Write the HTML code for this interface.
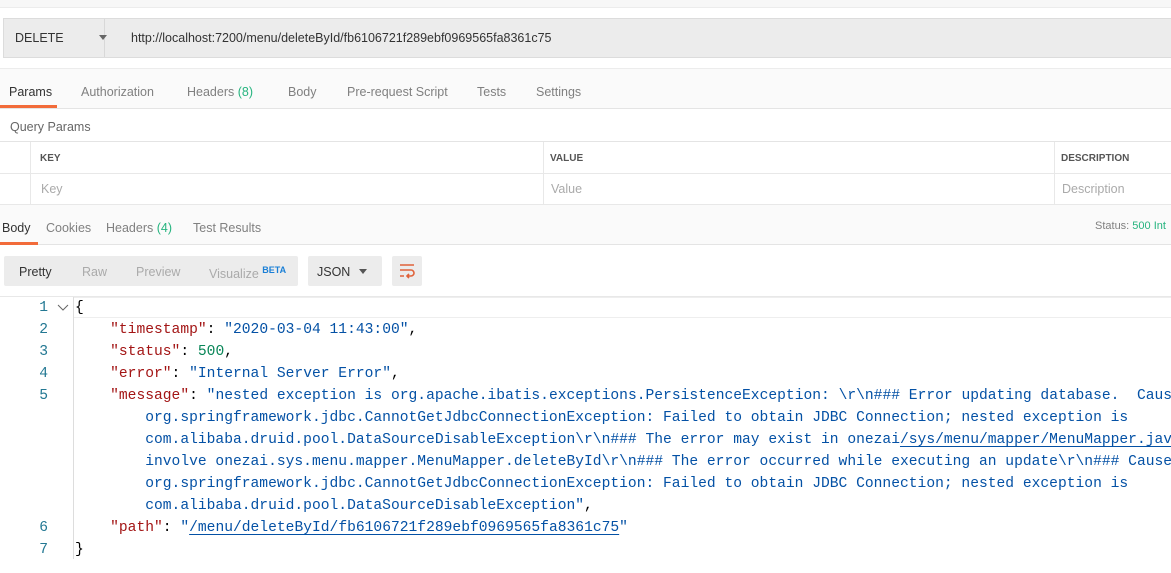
<!DOCTYPE html>
<html><head><meta charset="utf-8"><style>
*{margin:0;padding:0;box-sizing:border-box}
body{width:1171px;height:573px;overflow:hidden;background:#fff;font-family:"Liberation Sans",sans-serif;font-size:12.5px;color:#808080;position:relative}
.abs{position:absolute}
.code{font-family:"Liberation Mono",monospace;font-size:14.63px;line-height:22px;white-space:pre;color:#000}
.k{color:#a31515}.s{color:#0451a5}.n{color:#098658}
.u{text-decoration:underline;text-underline-offset:3px}
.ln{position:absolute;left:0;width:48px;text-align:right;color:#237893;font-family:"Liberation Mono",monospace;font-size:14.63px;line-height:22px}
</style></head><body>
<div class="abs" style="left:0;top:0;width:1171px;height:8px;background:#f7f7f7;border-bottom:1px solid #ececec"></div>
<div class="abs" style="left:3px;top:18px;width:1168px;height:40px;background:#ececec;border:1px solid #dcdcdc;border-right:none"></div>
<div class="abs" style="left:104px;top:19px;width:1px;height:38px;background:#d8d8d8"></div>
<div class="abs" style="left:15px;top:31px;color:#333;font-size:12.5px">DELETE</div>
<div class="abs" style="left:99px;top:35px;width:0;height:0;border-left:4px solid transparent;border-right:4px solid transparent;border-top:5px solid #666"></div>
<div class="abs" style="left:131px;top:31px;color:#333;font-size:12.5px">http://localhost:7200/menu/deleteById/fb6106721f289ebf0969565fa8361c75</div>
<div class="abs" style="left:0;top:68px;width:1171px;height:41px;background:#fafafa;border-top:1px solid #ececec;border-bottom:1px solid #e4e4e4"></div>
<div class="abs" style="left:9px;top:85px;color:#333">Params</div>
<div class="abs" style="left:0;top:105px;width:57px;height:3px;background:#f26b3a"></div>
<div class="abs" style="left:81px;top:85px">Authorization</div>
<div class="abs" style="left:187px;top:85px">Headers <span style="color:#26b47f">(8)</span></div>
<div class="abs" style="left:288px;top:85px">Body</div>
<div class="abs" style="left:347px;top:85px">Pre-request Script</div>
<div class="abs" style="left:477px;top:85px">Tests</div>
<div class="abs" style="left:536px;top:85px">Settings</div>
<div class="abs" style="left:10px;top:120px;color:#666">Query Params</div>
<div class="abs" style="left:0;top:141px;width:1171px;height:1px;background:#e4e4e4"></div>
<div class="abs" style="left:0;top:173px;width:1171px;height:1px;background:#e8e8e8"></div>
<div class="abs" style="left:0;top:204px;width:1171px;height:1px;background:#e8e8e8"></div>
<div class="abs" style="left:30px;top:142px;width:1px;height:62px;background:#e8e8e8"></div>
<div class="abs" style="left:543px;top:142px;width:1px;height:62px;background:#e8e8e8"></div>
<div class="abs" style="left:1054px;top:142px;width:1px;height:62px;background:#e8e8e8"></div>
<div class="abs" style="left:40px;top:153px;font-size:10px;font-weight:bold;color:#555">KEY</div>
<div class="abs" style="left:550px;top:153px;font-size:10px;font-weight:bold;color:#555">VALUE</div>
<div class="abs" style="left:1061px;top:153px;font-size:10px;font-weight:bold;color:#555">DESCRIPTION</div>
<div class="abs" style="left:41px;top:182px;color:#aaa">Key</div>
<div class="abs" style="left:551px;top:182px;color:#aaa">Value</div>
<div class="abs" style="left:1062px;top:182px;color:#aaa">Description</div>
<div class="abs" style="left:0;top:205px;width:1171px;height:40px;background:#fafafa;border-bottom:1px solid #e4e4e4"></div>
<div class="abs" style="left:2px;top:221px;color:#333">Body</div>
<div class="abs" style="left:0;top:242px;width:38px;height:3px;background:#f26b3a"></div>
<div class="abs" style="left:46px;top:221px">Cookies</div>
<div class="abs" style="left:106px;top:221px">Headers <span style="color:#26b47f">(4)</span></div>
<div class="abs" style="left:193px;top:221px">Test Results</div>
<div class="abs" style="left:1095px;top:220px;font-size:11px">Status: <span style="color:#26b47f">500 Int</span></div>
<div class="abs" style="left:4px;top:256px;width:294px;height:30px;background:#ececec;border-radius:2px"></div>
<div class="abs" style="left:19px;top:265px;color:#333">Pretty</div>
<div class="abs" style="left:82px;top:265px;color:#aaa">Raw</div>
<div class="abs" style="left:136px;top:265px;color:#aaa">Preview</div>
<div class="abs" style="left:209px;top:265px;color:#aaa">Visualize <sup style="color:#1a7fd6;font-size:9px;font-weight:bold">BETA</sup></div>
<div class="abs" style="left:308px;top:256px;width:74px;height:30px;background:#ececec;border-radius:2px"></div>
<div class="abs" style="left:317px;top:265px;color:#333">JSON</div>
<div class="abs" style="left:359px;top:269px;border-left:4px solid transparent;border-right:4px solid transparent;border-top:5px solid #555"></div>
<div class="abs" style="left:392px;top:256px;width:30px;height:30px;background:#ececec;border-radius:2px"></div>
<svg class="abs" style="left:398px;top:262px" width="18" height="18" viewBox="0 0 18 18"><path d="M2 3h14M2 8h11a3 3 0 0 1 0 6h-4M11 12l-2 2 2 2M2 14h4" fill="none" stroke="#e0623a" stroke-width="1.6"/></svg>
<div class="abs" style="left:0;top:296px;width:1171px;height:1px;background:#e8e8e8"></div>
<div class="abs" style="left:74px;top:297px;width:1097px;height:21px;border-top:1px solid #eee;border-bottom:1px solid #eee"></div>
<div class="abs" style="left:73px;top:297px;width:1px;height:262px;background:#ddd"></div>
<div class="ln" style="top:297px">1</div>
<div class="ln" style="top:319px">2</div>
<div class="ln" style="top:341px">3</div>
<div class="ln" style="top:363px">4</div>
<div class="ln" style="top:385px">5</div>
<div class="ln" style="top:517px">6</div>
<div class="ln" style="top:539px">7</div>
<svg class="abs" style="left:57px;top:303px" width="12" height="10"><path d="M1 2l5 5 5-5" fill="none" stroke="#666" stroke-width="1"/></svg>
<div class="abs code" style="left:75px;top:297px">{
    <span class="k">"timestamp"</span>: <span class="s">"2020-03-04 11:43:00"</span>,
    <span class="k">"status"</span>: <span class="n">500</span>,
    <span class="k">"error"</span>: <span class="s">"Internal Server Error"</span>,
    <span class="k">"message"</span>: <span class="s">"nested exception is org.apache.ibatis.exceptions.PersistenceException: \r\n### Error updating database.  Cause:
        org.springframework.jdbc.CannotGetJdbcConnectionException: Failed to obtain JDBC Connection; nested exception is
        com.alibaba.druid.pool.DataSourceDisableException\r\n### The error may exist in onezai<span class="u">/sys/menu/mapper/MenuMapper.java</span>
        involve onezai.sys.menu.mapper.MenuMapper.deleteById\r\n### The error occurred while executing an update\r\n### Cause:
        org.springframework.jdbc.CannotGetJdbcConnectionException: Failed to obtain JDBC Connection; nested exception is
        com.alibaba.druid.pool.DataSourceDisableException"</span>,
    <span class="k">"path"</span>: <span class="s">"<span class="u">/menu/deleteById/fb6106721f289ebf0969565fa8361c75</span>"</span>
}</div>
</body></html>
